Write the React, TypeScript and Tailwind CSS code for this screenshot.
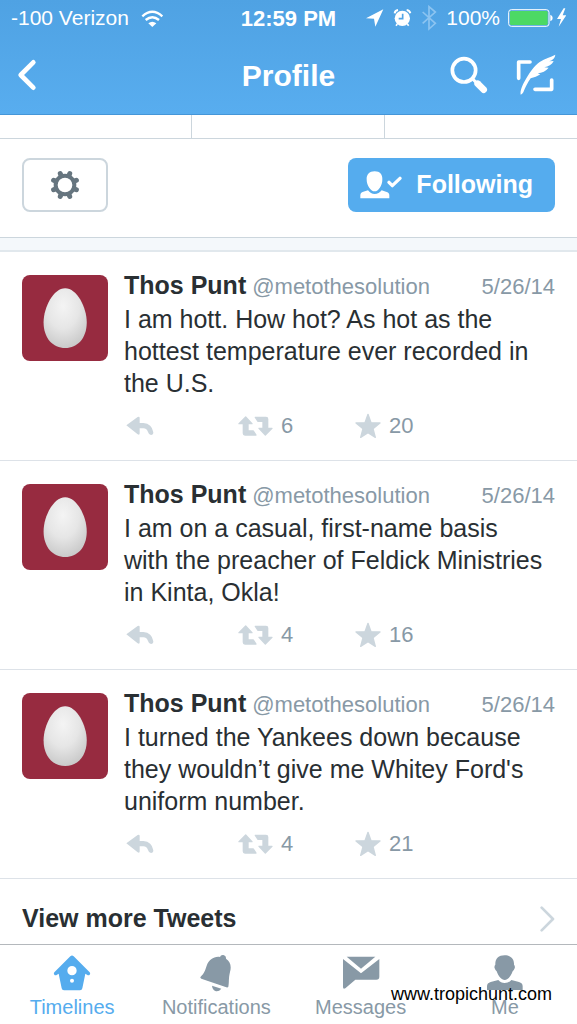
import type { ReactNode } from "react";

const tweets = [
  { text: "I am hott. How hot? As hot as the hottest temperature ever recorded in the U.S.", retweets: 6, stars: 20 },
  { text: "I am on a casual, first-name basis with the preacher of Feldick Ministries in Kinta, Okla!", retweets: 4, stars: 16 },
  { text: "I turned the Yankees down because they wouldn’t give me Whitey Ford's uniform number.", retweets: 4, stars: 21 },
];

function WifiIcon() {
  return (
    <svg width="23" height="17" viewBox="427 27 69 51" fill="none" stroke="currentColor" strokeWidth="7" aria-hidden="true">
      <path d="M431 46Q461 19 491 46M441 57Q461 40 481 57" />
      <path d="M449 67Q461 58 473 67L461 78Z" fill="currentColor" stroke="none" />
    </svg>
  );
}

function StatusIcons() {
  return (
    <svg width="72" height="26" viewBox="78 17 216 78" fill="currentColor" aria-hidden="true">
      <path d="M78 57L130 30L106 82L102 58Z" />
      <circle cx="187" cy="57" r="23" />
      <path d="M164 42Q165 33 174 32M200 32Q209 33 211 42" fill="none" stroke="currentColor" strokeWidth="6" />
      <path d="M172 74L168 79M202 74L206 79" fill="none" stroke="currentColor" strokeWidth="5" />
      <path d="M188 43V58H176" fill="none" stroke="#52a5e7" strokeWidth="5" />
      <path d="M248 38L286 72L267 89V22L286 38L248 72" fill="none" stroke="#8cc4f1" strokeWidth="5" />
    </svg>
  );
}

function BatteryIcon() {
  return (
    <svg width="58" height="20" viewBox="504 26 174 60" aria-hidden="true">
      <rect x="506" y="31" width="121" height="50" rx="8" fill="none" stroke="#fff" strokeWidth="3" />
      <rect x="510" y="35" width="113" height="42" rx="4" fill="#4cd964" />
      <path d="M631 46Q638 48 638 56Q638 64 631 66Z" fill="#fff" />
      <path d="M671 27L651 59H663L656 82L679 48H668L676 27Z" fill="#fff" />
    </svg>
  );
}

function BackIcon() {
  return (
    <svg width="20" height="32" viewBox="51 177 60 96" fill="none" stroke="currentColor" strokeWidth="14" strokeLinecap="round" strokeLinejoin="round" aria-hidden="true">
      <path d="M100 187L62 225L100 263" />
    </svg>
  );
}

function SearchIcon() {
  return (
    <svg width="38" height="40" viewBox="325 168 114 120" fill="none" stroke="currentColor" strokeLinecap="round" aria-hidden="true">
      <circle cx="367" cy="214" r="35" strokeWidth="11" />
      <path d="M393 240L404 251" strokeWidth="9" />
      <path d="M408 254L426 272" strokeWidth="20" />
    </svg>
  );
}

function ComposeIcon() {
  return (
    <svg width="40" height="42" viewBox="529 160 120 126" fill="none" stroke="currentColor" strokeWidth="11" strokeLinecap="round" strokeLinejoin="round" aria-hidden="true">
      <path d="M537 233V184H571M586 266H636V238" />
      <path d="M543 282C541 270 548 254 555 242C567 219 582 197 600 184C616 173 633 170 647 162C646 172 640 178 629 182L642 181C637 192 626 198 614 200L627 201C619 211 607 217 594 218L602 221C594 227 583 230 573 233C564 245 557 260 551 275Q548 281 543 282Z" fill="currentColor" stroke="none" />
    </svg>
  );
}

const teeth = [22.5, 67.5, 112.5, 157.5, 202.5, 247.5, 292.5, 337.5];

function GearIcon() {
  return (
    <svg width="30" height="30" viewBox="-45 -45 90 90" fill="none" stroke="#66757f" aria-hidden="true">
      <circle r="28" strokeWidth="12" />
      {teeth.map((angle) => (
        <path key={angle} d="M0 -30V-37" strokeWidth="15" strokeLinecap="round" transform={`rotate(${angle})`} />
      ))}
    </svg>
  );
}

function FollowIcon() {
  return (
    <svg width="42" height="28" viewBox="91 80 126 84" fill="currentColor" aria-hidden="true">
      <path d="M135 81C151 81 159 91 158 106C158 124 146 141 135 141C124 141 111 124 111 106C110 91 119 81 135 81Z" />
      <path d="M92 162V153Q92 144 101 142L115 138Q123 149 135 149Q148 149 156 138L169 142Q179 144 179 153V162Z" />
      <path d="M178 114L188 124L211 102" fill="none" stroke="currentColor" strokeWidth="10" strokeLinecap="round" strokeLinejoin="round" />
    </svg>
  );
}

function EggAvatar() {
  return (
    <svg width="86" height="86" viewBox="0 0 259 259" role="img" aria-label="Thos Punt" className="mt-[6px] shrink-0 rounded-lg bg-[#972b40]">
      <defs>
        <radialGradient id="shell" cx="45%" cy="30%" r="75%">
          <stop offset="0" stopColor="#f4f4f4" />
          <stop offset="0.5" stopColor="#e6e6e6" />
          <stop offset="1" stopColor="#c6c6c6" />
        </radialGradient>
      </defs>
      <path d="M130 40C165 40 195 97 195 143C195 190 167 220 130 220C93 220 65 190 65 143C65 97 95 40 130 40Z" fill="url(#shell)" />
    </svg>
  );
}

function ReplyIcon() {
  return (
    <svg width="28" height="20" viewBox="378 465 84 60" fill="currentColor" aria-hidden="true">
      <path d="M379 493L413 468Q419 465 419 471V486H430Q456 488 460 514Q460 522 453 522Q446 521 444 513Q441 503 430 502H419V517Q419 524 413 520Z" />
    </svg>
  );
}

function RetweetIcon() {
  return (
    <svg width="35" height="20" viewBox="713 466 105 60" fill="currentColor" stroke="currentColor" strokeWidth="4" strokeLinejoin="round" aria-hidden="true">
      <path d="M736 469L716 489H729V518Q729 523 734 523H767L759 511H743V489H755Z" />
      <path d="M765 470H797Q802 470 802 475V503H815L795 523L776 503H788V482H773Z" />
    </svg>
  );
}

function StarIcon() {
  return (
    <svg width="26" height="26" viewBox="404 456 78 78" fill="currentColor" stroke="currentColor" strokeWidth="4" strokeLinejoin="round" aria-hidden="true">
      <path d="M443 460L452 485L479 486L458 503L465 529L443 515L421 529L428 503L407 486L434 485Z" />
    </svg>
  );
}

function HomeIcon() {
  return (
    <svg width="38" height="36" viewBox="159 210 114 108" fill="currentColor" aria-hidden="true">
      <path fillRule="evenodd" d="M211 214Q216 209 221 214L269 262Q272 266 269 269Q266 272 261 269L256 266L247 310Q246 316 240 316H192Q186 316 185 310L176 266L171 269Q166 272 163 269Q160 266 163 262ZM216 243A14 14 0 1 0 216 271A14 14 0 1 0 216 243ZM216 281A6 6 0 1 0 216 293A6 6 0 1 0 216 281Z" />
    </svg>
  );
}

function BellIcon() {
  return (
    <svg width="32" height="38" viewBox="600 213 96 114" fill="currentColor" aria-hidden="true">
      <path d="M660 222Q662 215 670 216Q679 218 678 227C691 236 695 249 690 267C685 287 688 299 685 311Q684 314 679 313L604 287Q599 285 602 281C612 272 615 263 620 248C626 230 643 219 660 222Z" />
      <path d="M636 308L664 317Q656 327 646 324Q637 320 636 308Z" />
    </svg>
  );
}

function MailIcon() {
  return (
    <svg width="38" height="34" viewBox="155 220 114 102" fill="currentColor" aria-hidden="true">
      <path d="M169 222H255L212 258Z" />
      <path d="M158 229L212 272L267 229V282Q267 291 258 291H195L165 317Q158 321 158 313Z" />
    </svg>
  );
}

function PersonIcon() {
  return (
    <svg width="38" height="36" viewBox="588 209 114 108" fill="currentColor" aria-hidden="true">
      <path d="M644 210C663 210 673 221 672 238Q676 242 674 249Q672 255 668 258C663 273 653 284 644 284C635 284 625 273 620 258Q616 255 614 249Q612 242 616 238C615 221 625 210 644 210Z" />
      <path d="M591 314V303Q591 293 602 290L625 284Q632 293 644 293Q657 293 664 284L687 290Q698 293 698 303V314Z" />
    </svg>
  );
}

function Tab({ label, icon, active = false }: { label: string; icon: ReactNode; active?: boolean }) {
  return (
    <a href="#" className={`flex flex-col items-center gap-[2px] ${active ? "text-[#55acee]" : "text-[#8899a6]"}`}>
      <span className="flex h-10 items-center justify-center">{icon}</span>
      <span className="text-[20px] leading-6">{label}</span>
    </a>
  );
}

export default function App() {
  return (
    <div className="flex min-h-screen flex-col bg-white font-['Liberation_Sans',Arial,sans-serif] text-[#292f33]">
      <header className="border-b border-[#4596d8] bg-linear-to-b from-[#4fa2e3] to-[#58adef] text-white">
        <div className="grid h-9 grid-cols-[1fr_auto_1fr] items-center px-[11px] text-[21px]">
          <div className="flex items-center gap-3">
            <span>-100 Verizon</span>
            <WifiIcon />
          </div>
          <span className="text-[22px] font-bold">12:59 PM</span>
          <div className="flex items-center justify-end gap-2">
            <StatusIcons />
            <span>100%</span>
            <BatteryIcon />
          </div>
        </div>
        <div className="grid h-[78px] grid-cols-[1fr_auto_1fr] items-center px-[17px]">
          <button type="button" aria-label="Back" className="justify-self-start"><BackIcon /></button>
          <h1 className="text-[30px] font-bold">Profile</h1>
          <div className="flex items-center justify-end gap-7 pr-1">
            <button type="button" aria-label="Search"><SearchIcon /></button>
            <button type="button" aria-label="Compose"><ComposeIcon /></button>
          </div>
        </div>
      </header>

      <div className="grid h-6 grid-cols-3 divide-x divide-[#ccd6dd] border-b border-[#ccd6dd]">
        <div />
        <div />
        <div />
      </div>

      <div className="flex items-center justify-between border-b border-[#ccd6dd] px-[22px] pt-[19px] pb-[25px]">
        <button type="button" aria-label="Settings" className="flex h-[54px] w-[86px] items-center justify-center rounded-lg border-2 border-[#ccd6dd]">
          <GearIcon />
        </button>
        <button type="button" className="flex h-[54px] items-center gap-[14px] rounded-lg bg-[#55acee] pr-[22px] pl-3 text-[25px] font-bold text-white">
          <FollowIcon />
          Following
        </button>
      </div>
      <div className="h-[14px] border-b-2 border-[#e1e8ed] bg-[#f4f8fb]" />

      <main className="grow">
        <ul>
          {tweets.map((tweet) => (
            <li key={tweet.text} className="flex gap-4 border-b border-[#dde2e8] px-[22px] pt-[17px] pb-[21px]">
              <EggAvatar />
              <article className="min-w-0 grow">
                <div className="flex items-baseline gap-[6px] leading-8">
                  <h2 className="text-[25px] font-bold">Thos Punt</h2>
                  <span className="text-[22px] text-[#8899a6]">@metothesolution</span>
                  <time dateTime="2014-05-26" className="ml-auto text-[22px] text-[#8899a6]">5/26/14</time>
                </div>
                <p className="pr-2 text-[25px] leading-8">{tweet.text}</p>
                <div className="mt-[14px] grid grid-cols-[114px_117px_1fr] text-[#ccd6dd]">
                  <button type="button" aria-label="Reply" className="flex h-[26px] items-center pl-[2px]"><ReplyIcon /></button>
                  <button type="button" aria-label="Retweet" className="flex h-[26px] items-center gap-2">
                    <RetweetIcon />
                    <span className="text-[22px] leading-6 text-[#8899a6]">{tweet.retweets}</span>
                  </button>
                  <button type="button" aria-label="Favorite" className="flex h-[26px] items-center gap-2">
                    <StarIcon />
                    <span className="text-[22px] leading-6 text-[#8899a6]">{tweet.stars}</span>
                  </button>
                </div>
              </article>
            </li>
          ))}
        </ul>
        <a href="#" className="flex h-16 items-center justify-between px-[22px] pt-4 text-[25px] font-bold">
          View more Tweets
          <svg width="15" height="26" viewBox="752 61 45 78" fill="none" stroke="#ccd6dd" strokeWidth="8" strokeLinecap="round" strokeLinejoin="round" aria-hidden="true">
            <path d="M757 66L791 100L757 134" />
          </svg>
        </a>
      </main>

      <nav className="relative grid grid-cols-4 border-t border-[#b4b8bc] pt-2 pb-[5px]">
        <Tab label="Timelines" icon={<HomeIcon />} active />
        <Tab label="Notifications" icon={<BellIcon />} />
        <Tab label="Messages" icon={<MailIcon />} />
        <Tab label="Me" icon={<PersonIcon />} />
        <span className="absolute right-[25px] bottom-[18px] text-[18px] leading-6 text-black">www.tropichunt.com</span>
      </nav>
    </div>
  );
}
